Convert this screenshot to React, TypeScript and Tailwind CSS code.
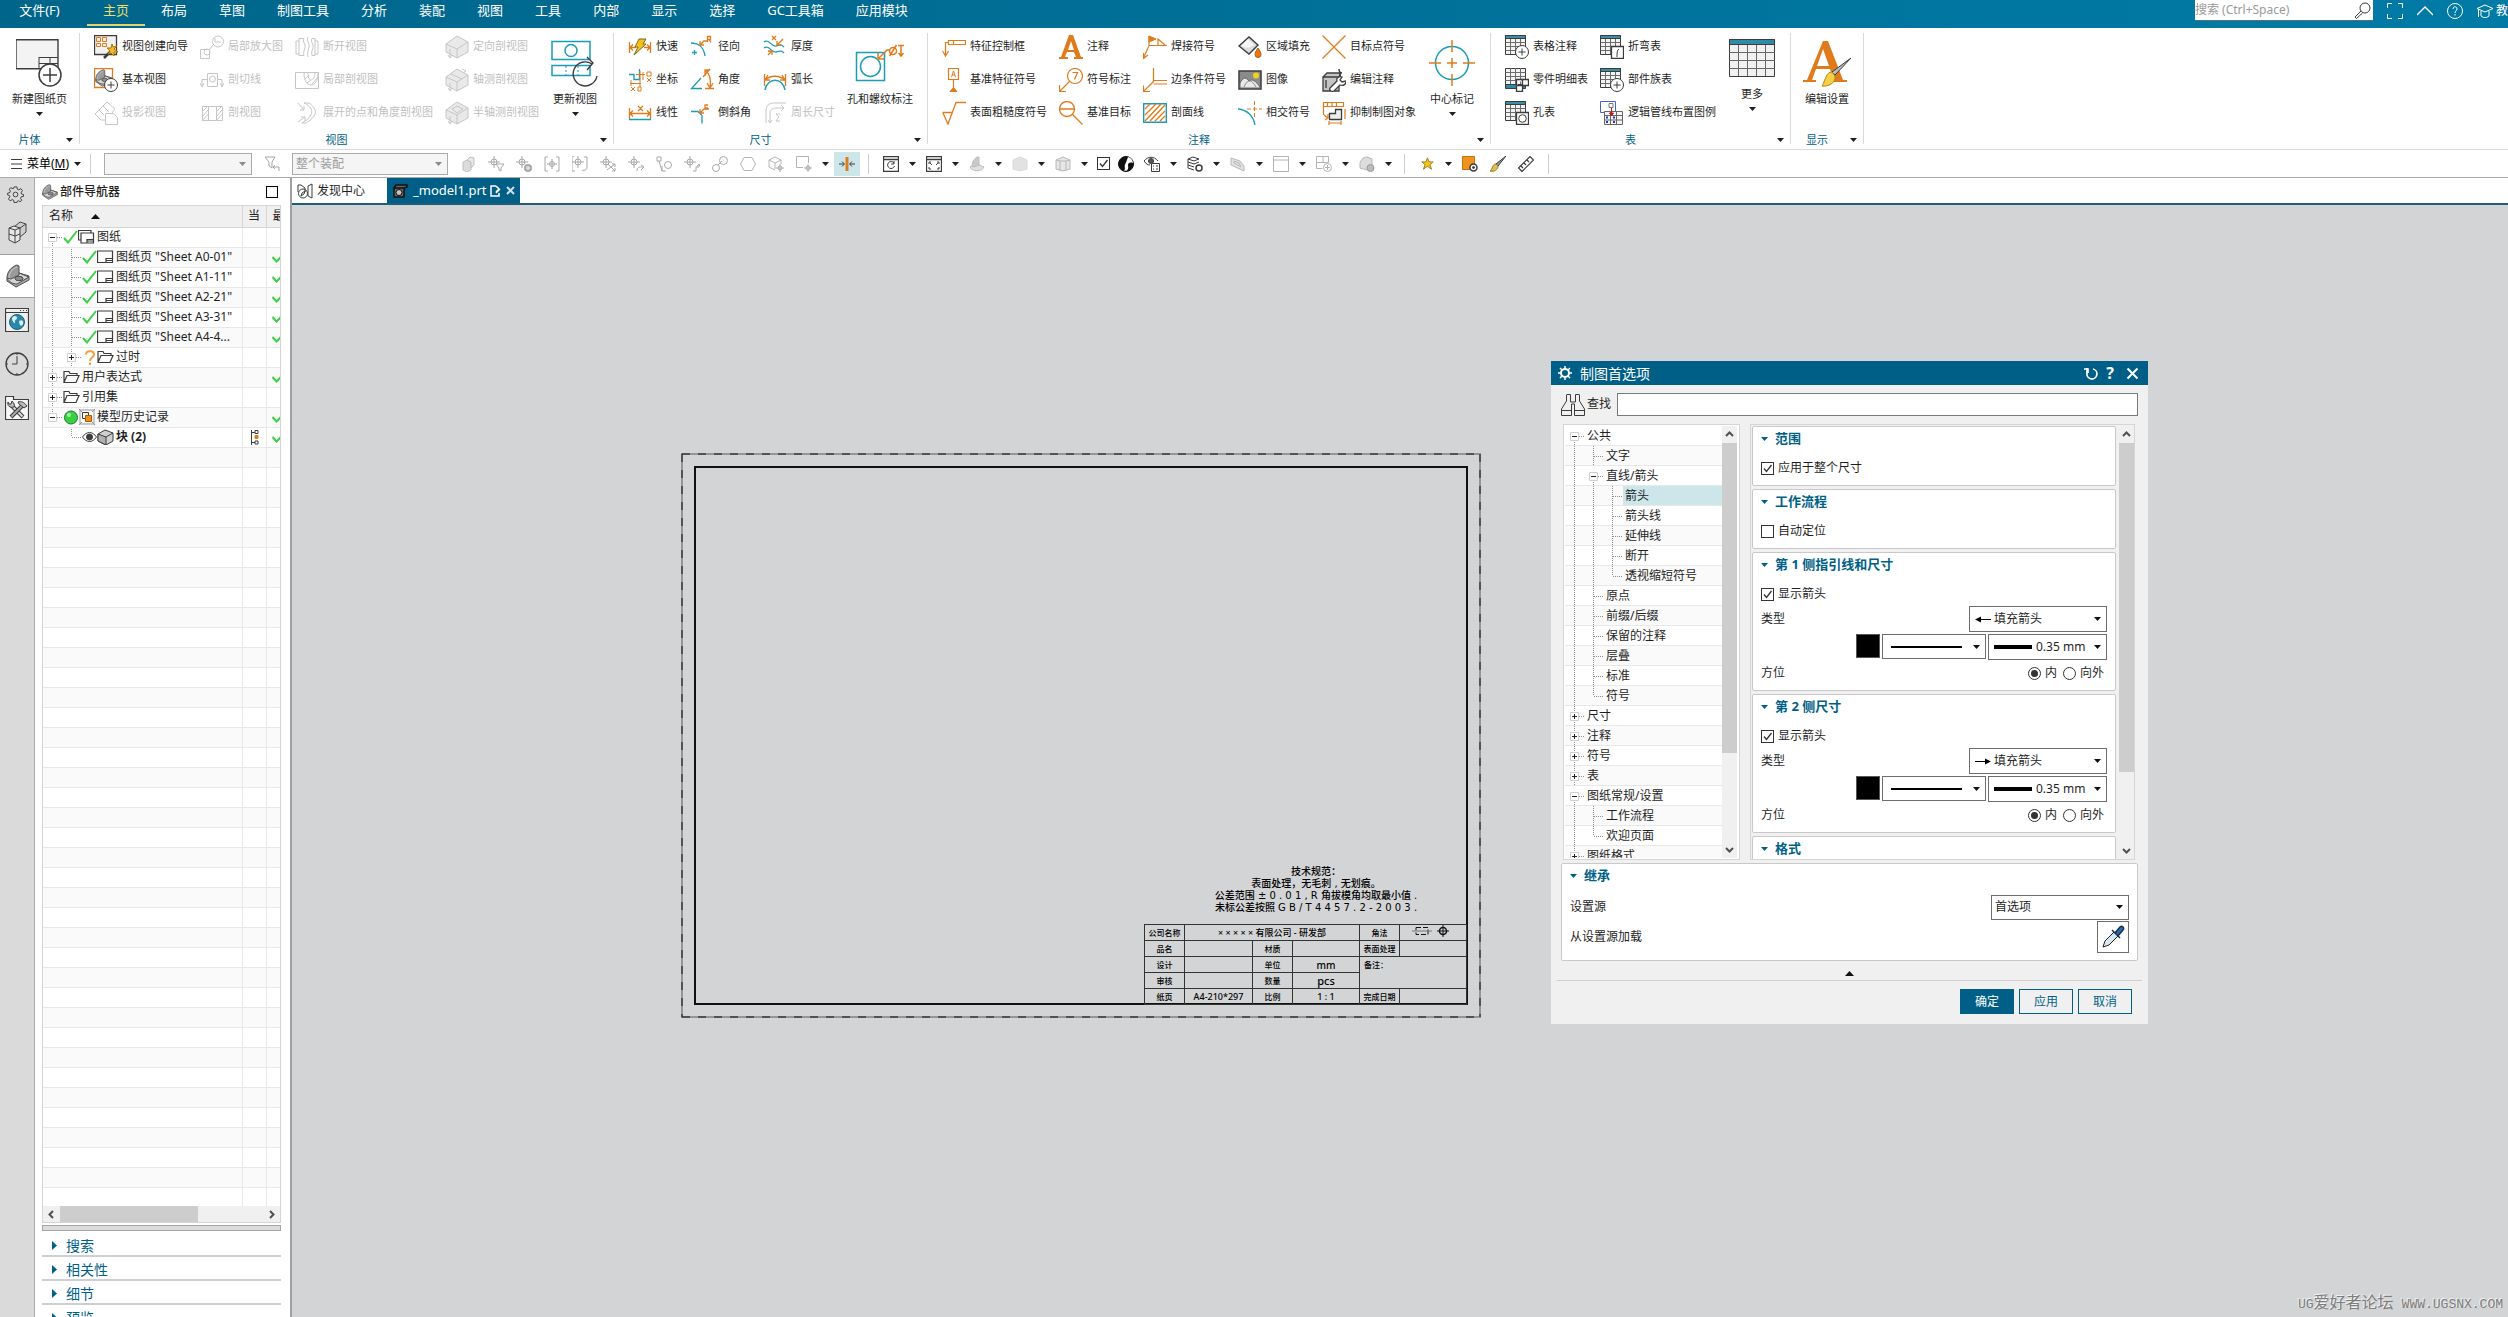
import type { ReactNode } from "react";

const O = "#e07b1c";
const T = "#1b9bb8";
const K = "#3c3c3c";
const D = "#c6c6c6";

type IconProps = { children: ReactNode; w?: number; h?: number; box?: string };

function Icon({ children, w = 24, h = 24, box }: IconProps) {
  return (
    <svg
      width={w}
      height={h}
      viewBox={box ?? `0 0 ${w} ${h}`}
      fill="none"
      stroke={K}
      strokeWidth="1"
      className="shrink-0"
      aria-hidden="true"
    >
      {children}
    </svg>
  );
}

function Caret({ color = "#1f1f1f" }: { color?: string }) {
  return (
    <svg width="7" height="4" viewBox="0 0 7 4" className="shrink-0" aria-hidden="true">
      <path d="M0 0h7L3.5 4z" fill={color} />
    </svg>
  );
}

/* ---------- ribbon icons ---------- */

const cubeShape = (
  <>
    <path d="M1 9 12 1l11 6v10l-11 6-11-6z" fill="#e9e9e9" stroke={D} />
    <path d="M1 9l11 5 11-7M12 14v9" stroke={D} />
  </>
);

const gridTable = (
  <>
    <path d="M.5.5h20v19H.5z" fill="#f3f3f3" />
    <path d="M.5.5h20v3H.5z" fill="#3a8fa8" />
    <path d="M.5 7.5h20M.5 11.5h20M.5 15.5h20M5.5 4v15M10.5 4v15M15.5 4v15" stroke="#6b6b6b" />
  </>
);

const roundPlus = (
  <>
    <circle cx="17" cy="17" r="6.5" fill="#fff" />
    <path d="M17 13.5v7M13.5 17h7" />
  </>
);

const partShape = (
  <>
    <path d="M1 14v3l9 6 13-7v-4L13 9z" fill="#a9a9a9" stroke="#4d4d4d" />
    <path d="M1 14 13 9l10 4-12 7c-4 0-8-2-10-6z" fill="#d6d6d6" stroke="#4d4d4d" />
    <path d="M1 14C1 8 5 3 11 1l2 1v9L5 15z" fill="#9a9a9a" stroke="#4d4d4d" />
    <path d="M3 14c0-5 3-9 8-11" stroke="#c9c9c9" />
    <ellipse cx="13" cy="14.5" rx="4" ry="2.2" fill="#8b8b8b" stroke="#4d4d4d" />
  </>
);

const wizardIcon = (
  <Icon>
    <path d="M.5.5h22v19H.5z" fill="#f1f1f1" strokeWidth="1.300" />
    <path d="M2.5 2.5h4v4h-4zM8.5 2.5h4v4h-4zM2.5 8.5h4v3h-4zM8.5 8.5h4v3h-4z" stroke={O} />
    <path d="m10 23 8-8" strokeWidth="2.5" />
    <path d="m18 9 1 3 4-1-3 3 4 3h-4v4l-3-3-3 1 2-3-3-3h4z" fill="#f0b92b" stroke="#a87800" />
  </Icon>
);

const baseViewIcon = (
  <Icon>
    <path d="M.5.5h18v19H.5z" stroke={O} strokeWidth="1.300" />
    <g transform="translate(1 1) scale(.75)">{partShape}</g>
    {roundPlus}
  </Icon>
);

const projectedIcon = (
  <Icon>
    <path d="M1 13 13 1l8 7-3 4M1 13l6 6h4M5 9l5 5M9 5l6 6" stroke={D} />
    <path d="M11.5 12.5h8l4 4v7h-12z" stroke={D} fill="#fff" />
  </Icon>
);

const detailIcon = (
  <Icon>
    <circle cx="18" cy="6.5" r="5.5" stroke={D} />
    <path d="M.5 14.5h9v9h-9zM13 10l-4 5M15 3v4h6" stroke={D} />
    <circle cx="7" cy="17" r="3" stroke={D} />
  </Icon>
);

const sectionLineIcon = (
  <Icon>
    <path d="M7.5 5.5h10v13h-10zM7 11.5H2v7M0 15l2 4 2-4M18 11.5h4v7M20 15l2 4 2-4" stroke={D} />
    <circle cx="12.5" cy="11" r="3" stroke={D} />
  </Icon>
);

const sectionViewIcon = (
  <Icon>
    <path d="M2.5 5.5h20v14h-20zM8.500 5v14M16.5 5v14M3 10l5-5M3 15l5-6M3 19l5-6M17 10l5-5M17 15l5-6M17 19l5-6" stroke={D} />
  </Icon>
);

const brokenIcon = (
  <Icon>
    <path d="M4 3.5h5c-2 4 2 5 1 9s-2 5-1 8H4zM4 6H1v13h3M20 3.5h-3c-2 4 2 5 1 9s-2 5-1 8h3zM20 6h3v13h-3M13 2c-2 4 2 6 1 10s-2 6-1 10" stroke={D} />
  </Icon>
);

const localSectionIcon = (
  <Icon>
    <path d="M.5 4.5h23v16H.5z" stroke={D} />
    <path d="M9 5c0 8 3 12 7 12s7-4 7-12M13 5c0 4 1 7 3 7s4-3 4-7M10 11l4-4M12 15l4-3M17 16l5-6" stroke={D} />
  </Icon>
);

const unfoldIcon = (
  <Icon>
    <path d="M9 2c7 3 9 8 7 12s-6 6-9 8M14 2c6 4 8 9 5 13s-5 5-8 7M3 2l6 7M9 5v4H5M3 21l7-5M6 16h4v4M9 2h5M7 22h4" stroke={D} />
  </Icon>
);

const orientCubeIcon = (
  <Icon>
    {cubeShape}
    <path d="M5 14v8M3 20l2 3 2-3" stroke={D} />
  </Icon>
);

const axoCubeIcon = (
  <Icon>
    {cubeShape}
    <path d="M6 6l11 5M5 15v7M3 20l2 3 2-3M17 1l4 2-3 2" stroke={D} />
  </Icon>
);

const halfAxoIcon = (
  <Icon>
    {cubeShape}
    <path d="M7 8l5-3 6 3-6 4zM5 15v7M3 20l2 3 2-3" stroke={D} />
  </Icon>
);

const rapidIcon = (
  <Icon>
    <path d="M1.5 7v11M22.5 7v11M2 12.5h6M16 12.5h6M5 9.5l-3 3 3 3M19 9.5l3 3-3 3" stroke={O} strokeWidth="1.300" />
    <path d="M11 4h7l-3 5h3L6 20l4-8H7z" fill="#f3c01c" stroke="#7d6a20" />
  </Icon>
);

const radialIcon = (
  <Icon>
    <path d="M1 8c8 0 13 5 14 13M2 17.5h5M4.5 15v5" stroke={T} strokeWidth="1.300" />
    <path d="M10 10l4-4h3M10 6v4h4M17.5 7V1.500h3v3h-3M19 4.500l2 3" stroke={O} strokeWidth="1.300" />
  </Icon>
);

const ordinateIcon = (
  <Icon>
    <path d="M1 6.5h5v5h5.5V1" stroke={T} strokeWidth="1.300" />
    <path d="M8 6.5h9M12 3v16M15 4v8M2 15.5h11M3 12v6M19 4h4v4h-4zM19 10l4 4M23 10l-4 4M3 19l4 4M7 19l-4 4M10 19h3v4h-3z" stroke={O} />
  </Icon>
);

const angularIcon = (
  <Icon>
    <path d="M11 10 1.5 20.500H12" stroke={T} strokeWidth="1.300" />
    <path d="m13 9 7-8M15 2c5 4 6 11 5 17M15 8V2h5M17 15l3 5 3-5M15 20.500h9" stroke={O} strokeWidth="1.300" />
  </Icon>
);

const linearIcon = (
  <Icon>
    <path d="M1.5 7v11M22.5 7v11M2 12.5h20M5 9.5l-3 3 3 3M19 9.5l3 3-3 3M10 5l5 5M15 5l-5 5" stroke={O} strokeWidth="1.300" />
    <path d="M1 18.5h22" stroke={T} strokeWidth="1.500" />
  </Icon>
);

const chamferIcon = (
  <Icon>
    <path d="M1 10.5h7l4 4v8" stroke={T} strokeWidth="1.300" />
    <path d="M10 12l4-4h5M10 8v4h4M18 4h-3v3h3" stroke={O} strokeWidth="1.300" />
  </Icon>
);

const thicknessIcon = (
  <Icon>
    <path d="M1 7c5-4 7 5 12 4s5-2 8 1M1 13c5-4 7 5 12 4s5-2 8 1" stroke={T} strokeWidth="1.300" />
    <path d="M9 1l4 4M13 1 9 5M20 4l-6 6M14 6v4h4M5 20l4-4M5 16h4v4" stroke={O} strokeWidth="1.300" />
  </Icon>
);

const arcLengthIcon = (
  <Icon>
    <path d="M2 22c2-13 18-13 20 0" stroke={T} strokeWidth="1.500" />
    <path d="M1.5 6v12M22.5 6v12M2 12C7 7 17 7 22 12M5 7l-3 5h5M19 7l3 5h-5" stroke={O} strokeWidth="1.300" />
  </Icon>
);

const perimeterIcon = (
  <Icon>
    <path d="M3 22V10c0-5 3-8 8-8h12M7 21V12c0-3 2-5 6-5h8M18 4l3 3-3 3M5 19l2 3 2-3M17 13h-4l3 3-3 4h4" stroke={D} />
  </Icon>
);

const holeIcon = (
  <Icon w={50} h={48}>
    <path d="M1.5 13.500h28v28h-28z" stroke={T} strokeWidth="1.500" />
    <circle cx="15.5" cy="27.5" r="10" stroke={T} strokeWidth="1.500" />
    <path d="m23 20 9-9h3M23 14v6h6M46 6v11M43 6.500h6M43.500 14l2.500 3 2.500-3" stroke={O} strokeWidth="1.500" />
    <circle cx="38" cy="12" r="3.500" stroke={O} strokeWidth="1.500" />
    <path d="m34.500 17 7-11" stroke={O} strokeWidth="1.500" />
  </Icon>
);

const featureFrameIcon = (
  <Icon>
    <path d="M6.5 5.5h17v4h-17zM11.5 5.500v4M6 7.500H3.500V20M.5 16l3 5 3-5" stroke={O} strokeWidth="1.200" />
  </Icon>
);

const datumFeatureIcon = (
  <Icon>
    <path d="M6.5.5h10v11h-10zM11.5 12v8" stroke={O} strokeWidth="1.200" />
    <path d="M8 23.5h7l-3.5-4z" fill={O} stroke={O} />
    <path d="m9.500 9 2-6 2 6M10 7h3" stroke={O} />
  </Icon>
);

const surfaceIcon = (
  <Icon>
    <path d="M.5 11.500h9M1 12l5 11L14 1.500h10" stroke={O} strokeWidth="1.300" />
  </Icon>
);

const noteIcon = (
  <Icon>
    <path d="M0 24v-2h2L10 0h4l8 22h2v2h-9v-2h2l-2-5H8l-2 5h3v2zM9 15h6L12 6z" fill={O} stroke="none" />
  </Icon>
);

const balloonIcon = (
  <Icon>
    <circle cx="16" cy="8" r="7.500" stroke={O} strokeWidth="1.200" />
    <path d="M11 13 1 23M.5 17v6.500H7M13.500 4.500h5l-3 7" stroke={O} strokeWidth="1.200" />
  </Icon>
);

const datumTargetIcon = (
  <Icon>
    <circle cx="8" cy="8" r="7.500" stroke={O} strokeWidth="1.300" />
    <path d="M.5 8h15M13 13l10.500 10.500" stroke={O} strokeWidth="1.300" />
  </Icon>
);

const weldIcon = (
  <Icon>
    <path d="M.5 23 6 10.500h18M6 10V1M.5 18v5.500L5 20M15 10V4l7 6" stroke={O} strokeWidth="1.200" />
    <path d="M6 1l7 3-7 3z" fill={O} stroke={O} />
  </Icon>
);

const edgeIcon = (
  <Icon>
    <path d="M10.500 0v12.500H24M10.500 16H24M11 13 1 23M.5 17.500v6H7" stroke={O} strokeWidth="1.200" />
  </Icon>
);

const hatchIcon = (
  <Icon>
    <path d="M.7 2.700h22.600v18.600H.7z" stroke={T} strokeWidth="1.400" />
    <path d="M2 8l5-5M2 14 13 3M2 20 18 3M7 20 22 4M12 20 22 10M17 20l5-5" stroke={O} strokeWidth="1.400" />
  </Icon>
);

const fillIcon = (
  <Icon>
    <path d="M1 11 11 2l9 8-9 9z" fill="#dcdcdc" strokeWidth="1.400" />
    <path d="M3 11 10 4l6 6-6 3z" fill="#f7f7f7" stroke="none" />
    <path d="M20 13c2 3 3 5 3 6.500a3 3 0 0 1-6 0c0-1.500 1-3.500 3-6.500z" fill="#e67817" stroke="#b85c0b" />
  </Icon>
);

const imageIcon = (
  <Icon>
    <path d="M1 3h22v18H1z" fill="#8b8b8b" strokeWidth="1.500" />
    <circle cx="18" cy="7.500" r="3" fill="#f3d21c" stroke="none" />
    <path d="M2 15c3-6 6-6 9-2 3-2 6-1 11 6v1H2z" fill="#e9e9e9" stroke="#666" />
    <path d="M6 19c2-5 4-6 6-6s4 3 6 6" stroke="#888" />
  </Icon>
);

const intersectIcon = (
  <Icon>
    <path d="M0 8c9 1 15 6 17 16" stroke={T} strokeWidth="1.300" />
    <path d="M16.500 0v4M16.500 6v4M16.500 12v4M9 8h4M15 8h4M21 8h3" stroke={O} />
  </Icon>
);

const targetPointIcon = (
  <Icon>
    <path d="m.5.5 23 23M23.500.5l-23 23" stroke={O} strokeWidth="1.200" />
  </Icon>
);

const editNoteIcon = (
  <Icon>
    <path d="M1 9h16v14H1zM1 9l4-4h13v4M4 12v8" fill="#c4c4c4" strokeWidth="1.300" />
    <path d="M17 1c0 3 1 4 3 4M18 5v3" strokeWidth="1.500" />
    <path d="m8 20 7-7c-1-3 2-5 5-4l-2 3 2 2 4-1c0 4-3 5-6 4l-6 6c-3 1-5-1-4-3z" fill="#fff" strokeWidth="1.300" />
  </Icon>
);

const suppressIcon = (
  <Icon>
    <path d="M1.500 1.500h20v4h-20zM5.500 2v3M10 2v3M14.500 2v3M1.500 6v8M2 14l4 3M3 19l3-2v-4M23 8v10M7 22h12M7 20v4M19 20v4" stroke={O} strokeWidth="1.200" />
    <path d="M7.500 18.500v-6h6v-4h6v10z" fill="#eee" strokeWidth="1.300" />
  </Icon>
);

const centerMarkIcon = (
  <Icon w={46} h={48}>
    <circle cx="23" cy="24" r="16.500" stroke={T} strokeWidth="1.500" />
    <path d="M23 1v12M23 35v12M0 24h12M34 24h12M18 24h10M23 19v10" stroke={O} strokeWidth="1.500" />
  </Icon>
);

const tableNoteIcon = <Icon>{gridTable}{roundPlus}</Icon>;

const partsListIcon = (
  <Icon>
    <path d="M.5.5h20v19H.5z" fill="#f3f3f3" />
    <path d="M.5 16.500h20v4H.5z" fill="#2d89a5" />
    <path d="M.5 4.500h20M.5 8.500h20M.5 12.500h20M5.500 0v16M10.500 0v16M15.500 0v16" stroke="#6b6b6b" />
    <path d="M17.500 11.500h6v6h-6zM11.500 17.500h6v6h-6z" fill="#fff" strokeWidth="1.300" />
    <path d="M17.500 11.500h-6v6" fill="#fff" strokeWidth="1.300" />
  </Icon>
);

const holeTableIcon = (
  <Icon>
    {gridTable}
    <path d="M11.500 11.500h12v12h-12z" fill="#fff" strokeWidth="1.300" />
    <circle cx="17.500" cy="17.500" r="3.800" />
  </Icon>
);

const bendTableIcon = (
  <Icon>
    {gridTable}
    <path d="M11.500 11.500h12v12h-12z" fill="#fff" strokeWidth="1.300" />
    <path d="M19 14c-2 1-2 4-2 8" />
  </Icon>
);

const routingIcon = (
  <Icon>
    <path d="M.5.5h15v11H.5z" stroke="#4a63c4" />
    <path d="M9 2.500h4v4H9z" stroke="#777" />
    <path d="M4.500 10.500h18v13h-18zM4.500 14.500h18M4.500 19h18M10.500 11v12M16.500 11v12" fill="#f4f4f4" stroke="#666" />
    <path d="M11.500 7v7M9.500 12l2 3 2-3z" stroke="#c31818" fill="#c31818" />
    <path d="M6 16.500h2M6 21h2M13 16.500h2M13 21h2" stroke="#2337b8" strokeWidth="2" />
  </Icon>
);

const newSheetIcon = (
  <Icon w={48} h={48}>
    <path d="M0 .7h42v29H0z" fill="#f3f3f3" strokeWidth="1.400" />
    <path d="M23 18.500h19M23 24.500h19M23 18v12M32 24v6M34 18v6" />
    <circle cx="34" cy="36" r="11" fill="#fff" strokeWidth="1.500" />
    <path d="M34 29v14M27 36h14" strokeWidth="1.500" />
  </Icon>
);

const updateViewIcon = (
  <Icon w={48} h={48}>
    <path d="M1 2.500h38v18H1zM1 26.500h38v10H1z" stroke={T} strokeWidth="1.500" />
    <circle cx="20" cy="11.500" r="6" stroke={T} strokeWidth="1.500" />
    <path d="M15 27v10M27 27v10" stroke={T} strokeDasharray="2 2" />
    <path d="M46 37a12 12 0 1 1-5-12M36 18l6 6-6 7" strokeWidth="1.400" />
  </Icon>
);

const moreTableIcon = (
  <Icon w={48} h={43}>
    <path d="M1.500.5h45v37h-45z" fill="#f1f1f1" />
    <path d="M1.500.5h45v5h-45z" fill="#2f8ca8" />
    <path d="M1 13.500h46M1 21.500h46M1 29.500h46M10.500 6v31M19.500 6v31M28.500 6v31M37.500 6v31" stroke="#666" />
  </Icon>
);

const editSettingsIcon = (
  <Icon w={48} h={48}>
    <path d="M0 43v-2h4L20 2h5l15 39h4v2H26v-2h5l-4-11H13L9 41h4v2zM14 27h12L20 10z" fill={O} stroke="none" />
    <path d="M48 19 32 36l-3-3z" fill="#bbb" />
    <path d="M29 33c-6 0-6 7-10 14 6 1 14-3 13-10z" fill="#f5cf45" stroke="#a98a1c" />
  </Icon>
);

/* ---------- ribbon ---------- */

type Cmd = { label: string; icon: ReactNode; off?: boolean };

type Group = {
  name: string;
  cmds: Cmd[];
  big: { label: string; icon: ReactNode; menu?: boolean };
};

const MENUS = ["主页", "布局", "草图", "制图工具", "分析", "装配", "视图", "工具", "内部", "显示", "选择", "GC工具箱", "应用模块"];

const GROUPS: Group[] = [
  { name: "片体", cmds: [], big: { label: "新建图纸页", icon: newSheetIcon, menu: true } },
  {
    name: "视图",
    cmds: [
      { label: "视图创建向导", icon: wizardIcon },
      { label: "基本视图", icon: baseViewIcon },
      { label: "投影视图", icon: projectedIcon, off: true },
      { label: "局部放大图", icon: detailIcon, off: true },
      { label: "剖切线", icon: sectionLineIcon, off: true },
      { label: "剖视图", icon: sectionViewIcon, off: true },
      { label: "断开视图", icon: brokenIcon, off: true },
      { label: "局部剖视图", icon: localSectionIcon, off: true },
      { label: "展开的点和角度剖视图", icon: unfoldIcon, off: true },
      { label: "定向剖视图", icon: orientCubeIcon, off: true },
      { label: "轴测剖视图", icon: axoCubeIcon, off: true },
      { label: "半轴测剖视图", icon: halfAxoIcon, off: true },
    ],
    big: { label: "更新视图", icon: updateViewIcon, menu: true },
  },
  {
    name: "尺寸",
    cmds: [
      { label: "快速", icon: rapidIcon },
      { label: "坐标", icon: ordinateIcon },
      { label: "线性", icon: linearIcon },
      { label: "径向", icon: radialIcon },
      { label: "角度", icon: angularIcon },
      { label: "倒斜角", icon: chamferIcon },
      { label: "厚度", icon: thicknessIcon },
      { label: "弧长", icon: arcLengthIcon },
      { label: "周长尺寸", icon: perimeterIcon, off: true },
    ],
    big: { label: "孔和螺纹标注", icon: holeIcon },
  },
  {
    name: "注释",
    cmds: [
      { label: "特征控制框", icon: featureFrameIcon },
      { label: "基准特征符号", icon: datumFeatureIcon },
      { label: "表面粗糙度符号", icon: surfaceIcon },
      { label: "注释", icon: noteIcon },
      { label: "符号标注", icon: balloonIcon },
      { label: "基准目标", icon: datumTargetIcon },
      { label: "焊接符号", icon: weldIcon },
      { label: "边条件符号", icon: edgeIcon },
      { label: "剖面线", icon: hatchIcon },
      { label: "区域填充", icon: fillIcon },
      { label: "图像", icon: imageIcon },
      { label: "相交符号", icon: intersectIcon },
      { label: "目标点符号", icon: targetPointIcon },
      { label: "编辑注释", icon: editNoteIcon },
      { label: "抑制制图对象", icon: suppressIcon },
    ],
    big: { label: "中心标记", icon: centerMarkIcon, menu: true },
  },
  {
    name: "表",
    cmds: [
      { label: "表格注释", icon: tableNoteIcon },
      { label: "零件明细表", icon: partsListIcon },
      { label: "孔表", icon: holeTableIcon },
      { label: "折弯表", icon: bendTableIcon },
      { label: "部件族表", icon: tableNoteIcon },
      { label: "逻辑管线布置图例", icon: routingIcon },
    ],
    big: { label: "更多", icon: moreTableIcon, menu: true },
  },
  { name: "显示", cmds: [], big: { label: "编辑设置", icon: editSettingsIcon } },
];

function RibbonGroup({ group }: { group: Group }) {
  return (
    <>
      <section className="flex flex-col pt-[2px]" aria-label={group.name}>
        <div className={`flex h-[101px] gap-3 ${group.cmds.length > 0 ? "px-3.5" : "px-3"}`}>
          {group.cmds.length > 0 && (
            <div className="grid grid-flow-col grid-rows-[33px_33px_33px] gap-x-3">
              {group.cmds.map((c) => (
                <button
                  key={c.label}
                  disabled={c.off}
                  className="flex items-center gap-1 text-[11px] whitespace-nowrap text-[#1f1f1f] disabled:text-[#c0c0c0]"
                >
                  {c.icon}
                  {c.label}
                </button>
              ))}
            </div>
          )}
          <button className="flex min-w-12 flex-col items-center pt-[9px] text-[11px] whitespace-nowrap text-[#1f1f1f]">
            {group.big.icon}
            <span className="mt-[3px] leading-[18px]">{group.big.label}</span>
            {group.big.menu && (
              <span className="mt-1">
                <Caret />
              </span>
            )}
          </button>
        </div>
        <div className="flex h-[18px] items-center text-[11px] text-[#005f87]">
          <span className="flex-1 text-center">{group.name}</span>
          <button className="flex w-5 justify-center" aria-label={`${group.name}选项`}>
            <Caret />
          </button>
        </div>
      </section>
      <div className="my-[5px] w-px bg-[#d9d9d9]" />
    </>
  );
}

function MenuBar() {
  return (
    <header className="flex h-7 shrink-0 items-stretch bg-gradient-to-r from-[#00658a] to-[#007ba6] text-[13px] text-white">
      <button className="w-[87px] pr-2 pb-[6px]">文件(F)</button>
      {MENUS.map((m, i) => (
        <button
          key={m}
          className={
            i === 0
              ? "mb-[2px] border-b-2 border-[#e8d36b] px-4 pb-[2px] text-[#f0dc6e]"
              : "mb-[2px] border-b-2 border-transparent px-4 pb-[2px]"
          }
        >
          {m}
        </button>
      ))}
      <div className="ml-auto flex h-[21px] items-center">
        <div className="flex h-[21px] w-[178px] items-center border-b border-[#54707c] bg-white pr-[2px]">
          <input
            aria-label="搜索"
            placeholder="搜索 (Ctrl+Space)"
            className="min-w-0 flex-1 text-[12px] text-black outline-none placeholder:text-[#9a9a9a]"
          />
          <Icon w={17} h={17}>
            <circle cx="11" cy="6" r="5" />
            <path d="m7 9-6 6 1.500 1.500 6-5.500" />
          </Icon>
        </div>
        <div className="flex items-center gap-[14px] pl-[14px] text-[12px]">
          <Icon w={16} h={16}>
            <path d="M.5 5V.5H5M11 .5h4.500V5M15.500 11v4.500H11M5 15.500H.5V11" stroke="#fff" />
          </Icon>
          <Icon w={16} h={16}>
            <path d="m0 12 8-8 8 8" stroke="#fff" strokeWidth="1.300" />
          </Icon>
          <Icon w={16} h={16}>
            <circle cx="8" cy="8" r="7.500" stroke="#fff" />
            <path d="M6 6c0-3 4-3 4 0 0 2-2 1.500-2 4M8 11v1.500" stroke="#fff" />
          </Icon>
          <span className="flex shrink-0 items-center gap-[3px]">
            <Icon w={16} h={16}>
              <path d="M0 5.500 8 2l8 3.500L8 9zM4 8v5c2 2 6 2 8 0V8M1.500 6v8" stroke="#fff" />
            </Icon>
            教
          </span>
        </div>
      </div>
    </header>
  );
}

/* ---------- selection / view toolbar ---------- */

const snap = (extra: ReactNode) => (
  <Icon w={16} h={16}>
    <g stroke="#a8a8a8">
      <circle cx="6" cy="6" r="3" />
      <path d="M6 0v12M0 6h12" />
      {extra}
    </g>
  </Icon>
);

const FILTER_ICONS: ReactNode[] = [
  <Icon w={16} h={16} key="part">
    <path d="m3 6 4-2 4 2v8l-4 2-4-2z" fill="#dcdcdc" stroke="#c0c0c0" />
    <path d="m7 4 3-3 4 1v7l-3 3V6z" fill="#e8e8e8" stroke="#c0c0c0" />
  </Icon>,
  snap(<path d="M8 8h8l-3 4v3l-2-1v-2z" fill="#fff" />),
  snap(<circle cx="12" cy="12" r="3" fill="#ddd" strokeWidth="2" />),
  <Icon w={16} h={16} key="box">
    <path d="M4 1H1v14h3M12 1h3v14h-3M8 3v10M3 8h10" stroke="#a8a8a8" />
    <circle cx="8" cy="8" r="2.500" stroke="#a8a8a8" />
  </Icon>,
  snap(<path d="M3 0H0v15h3M12 1h3v10M10 14c3 1 5 0 5-3" />),
  snap(<path d="m7 14 8-6M15 15 8 8M12 15h3v-3M12 8h3v3" />),
  snap(<path d="M9 15c0-4 2-4 6-4M13 9l3 2-3 3" />),
  <Icon w={16} h={16} key="chain">
    <path d="M1 1h4v4H1zM3 5l3 10M6 10v5h4" stroke="#a8a8a8" />
    <circle cx="12" cy="9" r="3.500" stroke="#a8a8a8" />
  </Icon>,
  snap(<path d="M9 15h3v-4h3V8M13 10l2-2 1 2" />),
  <Icon w={16} h={16} key="link">
    <circle cx="11.500" cy="4.500" r="4" stroke="#a8a8a8" />
    <circle cx="4" cy="12" r="3.500" stroke="#a8a8a8" />
    <path d="m6 9 4-4" stroke="#a8a8a8" />
  </Icon>,
  <Icon w={16} h={16} key="hex">
    <path d="M4 1.500h8L15.500 8 12 14.500H4L.5 8z" stroke="#b4b4b4" />
  </Icon>,
  <Icon w={16} h={16} key="cube">
    <path d="m1 4 6-3 6 3v4M1 4v7l6 3M1 4l6 3 6-3M7 7v6M12 8v8M8 12h8" stroke="#b4b4b4" />
    <circle cx="12" cy="12" r="2" stroke="#a8a8a8" />
  </Icon>,
  <Icon w={16} h={16} key="area">
    <path d="M7 11.500H.5V.5h12V7M12 8v8M8 12h8" stroke="#b4b4b4" />
    <circle cx="12" cy="12" r="2" stroke="#a8a8a8" />
  </Icon>,
];

const VIEW_ICONS: ReactNode[] = [
  <Icon w={16} h={16} key="refresh">
    <path d="M.5.5h15v15H.5zM.5 3.500h15" strokeWidth="1.300" />
    <path d="M11 7a3.500 3.500 0 1 0 .5 3M11 5v3H8" />
  </Icon>,
  <Icon w={16} h={16} key="fit">
    <path d="M.5.5h15v15H.5zM.5 3.500h15" strokeWidth="1.300" />
    <path d="M3 8V6h2M11 6h2v2M13 11v2h-2M5 13H3v-2M4 7l2 2M12 7l-2 2" />
  </Icon>,
  <Icon w={16} h={16} key="part">
    <path d="M1 11 8 8l7 3c-2 5-12 5-14 0z" fill="#e0e0e0" stroke="#bdbdbd" />
    <path d="M3 10c0-4 2-7 5-9h2v8l-5 2z" fill="#c9c9c9" stroke="#bdbdbd" />
  </Icon>,
  <Icon w={16} h={16} key="solid">
    <path d="m1 4 7-3 7 3v9l-7 2-7-2z" fill="#e2e2e2" stroke="#dadada" />
  </Icon>,
  <Icon w={16} h={16} key="prism">
    <path d="m1 4 7-3 7 3v9l-7 2-7-2zM1 4l4 1v10M5 5h6v10M11 5l4-1" fill="#e6e6e6" stroke="#b8b8b8" />
  </Icon>,
];

const RENDER_ICONS: ReactNode[] = [
  <Icon w={16} h={16} key="eye">
    <path d="M0 5c4-5 10-5 14 0M0 5c2 3 4 4 6 4" />
    <circle cx="7" cy="5" r="2.500" fill="#555" />
    <path d="M7.500 7.500h8v8h-8zM9 10h1M9 13h1M12 10h2M12 13h2" fill="#fff" />
  </Icon>,
  <Icon w={16} h={16} key="layers">
    <path d="m1 3 5-2 6 2-5 2zM1 6l6 2 5-2M1 9l6 2M1 12l6 2M1 3v9" />
    <circle cx="12" cy="12" r="3" fill="#fff" strokeWidth="1.500" />
  </Icon>,
  <Icon w={16} h={16} key="cut">
    <path d="m1 2 9 3 4 5v5L1 9zM4 5l5 2 2 4-7-4z" fill="#e2e2e2" stroke="#b8b8b8" />
  </Icon>,
  <Icon w={16} h={16} key="window">
    <path d="M.5.5h15v15H.5zM.5 4h15" stroke="#b4b4b4" />
  </Icon>,
  <Icon w={16} h={16} key="layout">
    <path d="M.5.5h12v6M.5.5v12h6M7 .5v6M.5 6.500h12" stroke="#b4b4b4" />
    <circle cx="11.500" cy="11.500" r="4" stroke="#b4b4b4" />
    <path d="M11.500 9v5M9 11.500h5" stroke="#b4b4b4" />
  </Icon>,
  <Icon w={16} h={16} key="clip">
    <path d="M1 7c1-4 4-6 8-6l4 2v6l-5 5-7-2z" fill="#dcdcdc" stroke="#b8b8b8" />
    <circle cx="11.500" cy="12" r="3.500" fill="#bbb" stroke="#999" />
  </Icon>,
];

function ToolButton({ icon, menu }: { icon: ReactNode; menu?: boolean }) {
  return (
    <button className="flex h-6 items-center">
      <span className="flex w-7 justify-center">{icon}</span>
      {menu && (
        <span className="flex w-[15px] justify-center">
          <Caret />
        </span>
      )}
    </button>
  );
}

function Rule() {
  return <div className="mx-2 h-5 w-px bg-[#cfcfcf]" />;
}

function Toolbar() {
  return (
    <div className="flex h-[29px] shrink-0 items-center border-t border-b border-t-[#d9d9d9] border-b-[#a9a9a9] pl-[11px] text-[12px]">
      <button className="flex items-center gap-[5px]">
        <Icon w={11} h={12}>
          <path d="M0 1.500h11M0 6h11M0 10.500h11" />
        </Icon>
        <span>
          菜单(<u>M</u>)
        </span>
        <Caret />
      </button>
      <div className="ml-[9px] h-5 w-px bg-[#cfcfcf]" />
      <DropDown label="类型过滤器" options={[""]} className="ml-[13px] h-[22px] w-[148px]" disabled />
      <span className="flex w-10 justify-center">
        <Icon w={16} h={16}>
          <path d="M1 1h10L8 6v6l-3-2V6zM9 11h6v4M11 9l-2 2 2 2" stroke="#a5a5a5" />
        </Icon>
      </span>
      <DropDown label="选择范围" options={["整个装配"]} className="mr-[6px] h-[22px] w-[156px]" disabled />
      {FILTER_ICONS.map((icon, i) => (
        <ToolButton key={i} icon={icon} menu={i === FILTER_ICONS.length - 1} />
      ))}
      <button className="ml-px flex h-6 w-[26px] items-center justify-center bg-[#cde6ea]" aria-label="捕捉">
        <Icon w={16} h={16}>
          <path d="M8 1v14" stroke={O} strokeWidth="3" />
          <path d="M0 8h5M3 5.500 5.500 8 3 10.500M16 8h-5M13 5.500 10.500 8l2.500 2.500" />
        </Icon>
      </button>
      <Rule />
      {VIEW_ICONS.map((icon, i) => (
        <ToolButton key={i} icon={icon} menu />
      ))}
      <span className="flex w-[22px] justify-center">
        <Check label="剖切" />
      </span>
      <span className="flex w-6 justify-center">
        <Icon w={16} h={16}>
          <circle cx="8" cy="8" r="7.500" fill="#111" stroke="#111" />
          <path d="M10 1a7 7 0 0 1 5 6c-3-1-5 0-5 2s1 3-1 5.500c-2 .5-3 0-3 0 2-2 0-4 1-6s2-4 3-7.500z" fill="#fff" stroke="none" />
        </Icon>
      </span>
      {RENDER_ICONS.map((icon, i) => (
        <ToolButton key={i} icon={icon} menu />
      ))}
      <Rule />
      <ToolButton
        menu
        icon={
          <Icon w={13} h={13} box="0 0 16 16">
            <path d="m8 1 2 5h5l-4 3.500 2 5.500-5-3.500L3 15l2-5.500L1 6h5z" fill="#f5c518" stroke="#8a6d10" />
          </Icon>
        }
      />
      <ToolButton
        icon={
          <Icon w={16} h={16}>
            <path d="M.5.5h12v13H.5z" fill="#f0921f" stroke="#c96f0c" />
            <circle cx="11.500" cy="11.500" r="3.500" fill="#fff" strokeWidth="1.500" />
            <circle cx="11.500" cy="11.500" r="1" fill={K} />
          </Icon>
        }
      />
      <ToolButton
        icon={
          <Icon w={16} h={16}>
            <path d="M16 0 8 10 6 8z" fill="#999" />
            <path d="M6 8c-4 0-3 5-6 7 4 1 8-1 8-5z" fill="#e3bf55" stroke="#8f762c" />
          </Icon>
        }
      />
      <ToolButton
        icon={
          <Icon w={16} h={16}>
            <path d="M.5 12 12 .5l3.500 3.500L4 15.500zM3 10l2 2M6 7l2 2M9 4l2 2" strokeWidth="1.200" />
          </Icon>
        }
      />
      <Rule />
    </div>
  );
}

/* ---------- form controls ---------- */

type DropDownProps = {
  label: string;
  options: string[];
  className: string;
  disabled?: boolean;
  lead?: ReactNode;
  indent?: string;
};

function DropDown({ label, options, className, disabled, lead, indent = "pl-[3px]" }: DropDownProps) {
  return (
    <div className={`relative flex items-center border ${disabled ? "border-[#ababab] bg-[#f5f5f5]" : "border-[#6e6e6e] bg-white"} ${className}`}>
      {lead && <span className="pointer-events-none absolute left-[5px]">{lead}</span>}
      <select
        aria-label={label}
        disabled={disabled}
        className={`h-full w-full appearance-none bg-transparent text-[12px] text-[#1f1f1f] outline-none disabled:text-[#9c9c9c] ${indent}`}
      >
        {options.map((o) => (
          <option key={o}>{o}</option>
        ))}
      </select>
      <span className="pointer-events-none absolute right-[5px] flex">
        <Caret color={disabled ? "#8a8a8a" : "#111"} />
      </span>
    </div>
  );
}

function Check({ label, text, off }: { label?: string; text?: string; off?: boolean }) {
  return (
    <label className="flex items-center gap-1">
      <span className="relative flex">
        <input
          type="checkbox"
          aria-label={label}
          defaultChecked={!off}
          className="peer size-[13px] appearance-none border border-[#333] bg-white"
        />
        <svg viewBox="0 0 13 13" className="pointer-events-none absolute inset-0 hidden size-[13px] peer-checked:block">
          <path d="m3 6.500 2.500 3L10.500 3" fill="none" stroke="#333" strokeWidth="1.300" />
        </svg>
      </span>
      {text}
    </label>
  );
}

function Radio({ name, text, on }: { name: string; text: string; on?: boolean }) {
  return (
    <label className="flex items-center gap-1">
      <span className="relative flex">
        <input
          type="radio"
          name={name}
          defaultChecked={on}
          className="peer size-[13px] appearance-none rounded-full border border-[#333] bg-white"
        />
        <span className="pointer-events-none absolute inset-[3px] hidden rounded-full bg-[#333] peer-checked:block" />
      </span>
      {text}
    </label>
  );
}

function Chevron({ d }: { d: string }) {
  return (
    <svg width="9" height="9" viewBox="0 0 9 9" aria-hidden="true">
      <path d={d} fill="none" stroke="#505050" strokeWidth="2" />
    </svg>
  );
}

function ScrollBar({ thumb }: { thumb: string }) {
  return (
    <div className="flex w-[15px] shrink-0 flex-col items-center bg-[#f0f0f0]">
      <button className="flex h-[17px] items-center" aria-label="向上滚动">
        <Chevron d="m1 6 3.500-3.500L8 6" />
      </button>
      <div className={`w-full bg-[#cdcdcd] ${thumb}`} />
      <button className="mt-auto flex h-[17px] items-center" aria-label="向下滚动">
        <Chevron d="m1 3 3.500 3.500L8 3" />
      </button>
    </div>
  );
}

/* ---------- trees ---------- */

// "|" passes through, "+" and "-" are expanders ("L" closes its level), "t" a branch, "l" the last branch
function Guides({ spec }: { spec: string }) {
  return (
    <span className="mr-px flex shrink-0">
      {spec.split("").map((s, i) => (
        <svg key={i} width="19" height="20" viewBox="0 0 19 20" fill="none" aria-hidden="true">
          {s === "|" || s === "t" || s === "+" ? <path d="M9.500 0v20" stroke="#8f8f8f" strokeDasharray="1 1" /> : null}
          {s === "l" || s === "L" ? <path d="M9.500 0v10" stroke="#8f8f8f" strokeDasharray="1 1" /> : null}
          {s !== "|" && s !== " " && <path d="M10 10.500h9" stroke="#8f8f8f" strokeDasharray="1 1" />}
          {s === "-" && <path d="M9.500 10v10" stroke="#8f8f8f" strokeDasharray="1 1" />}
          {(s === "+" || s === "-" || s === "L") && (
            <>
              <path d="M5.500 6.500h8v8h-8z" fill="#fff" stroke="#cfcfcf" />
              <path d={s === "+" ? "M7 10.500h5M9.500 8v5" : "M7 10.500h5"} stroke="#222" />
            </>
          )}
        </svg>
      ))}
    </span>
  );
}

const tick = (
  <Icon w={15} h={14}>
    <path d="m1 8 4 4.500L14 1" stroke="#3bcf45" strokeWidth="2" />
  </Icon>
);
const sheet = (
  <Icon w={17} h={14}>
    <path d="M.5 1h15v11.500H.5zM9 12V8.500h6M9 10.500h6" strokeWidth="1.200" />
  </Icon>
);
const sheets = (
  <Icon w={17} h={14}>
    <path d="M3 10H.5V.5H13V3M3 3h12.500v10H3zM9 13V9.500h6M9 11h6" strokeWidth="1.200" />
  </Icon>
);
const folder = (
  <Icon w={17} h={14}>
    <path d="M1 12.500v-11h5l1 2h7v2M1 12.500l3-7h12l-3 7z" strokeWidth="1.200" />
  </Icon>
);
const question = (
  <Icon w={15} h={15}>
    <path d="M4 4.500C4 0 12 0 12 4.500c0 3-4 3-4 6.500M8 12.500V15" stroke="#f0a040" strokeWidth="2" />
  </Icon>
);
const greenBall = (
  <Icon w={16} h={15}>
    <circle cx="8" cy="7.500" r="6.500" fill="#37d043" stroke="#217a28" />
    <circle cx="6" cy="5" r="2" fill="#a5f0a8" stroke="none" />
  </Icon>
);
const history = (
  <Icon w={16} h={16}>
    <path d="M1 4V1h14v14H1V4M0 0l3 3M16 0l-3 3M16 16l-3-3M0 16l3-3" stroke="#999" />
    <path d="M3.500 3.500h6v6h-6z" />
    <path d="M6.500 6.500h6v6h-6z" fill="#ef8d1e" stroke="#a55c08" />
  </Icon>
);
const eye = (
  <Icon w={15} h={14}>
    <path d="M.5 7c4-6 10-6 14 0-4 6-10 6-14 0z" fill="#fff" />
    <circle cx="7.500" cy="7" r="3" fill={K} />
  </Icon>
);
const block = (
  <Icon w={17} h={16}>
    <path d="m1 5 7-4 8 3v8l-7 4-8-4z" fill="#d0d0d0" />
    <path d="m1 5 8 3v8l-8-4z" fill="#b0b0b0" />
    <path d="m9 8 7-4" />
  </Icon>
);

type NavRow = { guides: string; icons: ReactNode[]; text: string; tick?: boolean; bold?: boolean };

const NAV_ROWS: NavRow[] = [
  { guides: "-", icons: [tick, sheets], text: "图纸" },
  { guides: "|t", icons: [tick, sheet], text: '图纸页 "Sheet A0-01"', tick: true },
  { guides: "|t", icons: [tick, sheet], text: '图纸页 "Sheet A1-11"', tick: true },
  { guides: "|t", icons: [tick, sheet], text: '图纸页 "Sheet A2-21"', tick: true },
  { guides: "|t", icons: [tick, sheet], text: '图纸页 "Sheet A3-31"', tick: true },
  { guides: "|t", icons: [tick, sheet], text: '图纸页 "Sheet A4-4...', tick: true },
  { guides: "|+", icons: [question, folder], text: "过时" },
  { guides: "+", icons: [folder], text: "用户表达式", tick: true },
  { guides: "+", icons: [folder], text: "引用集" },
  { guides: "L", icons: [greenBall, history], text: "模型历史记录", tick: true },
  { guides: " l", icons: [eye, block], text: "块 (2)", tick: true, bold: true },
];

const NAV_SLOTS = 49;
const SECTIONS = ["搜索", "相关性", "细节", "预览"];

function Navigator() {
  return (
    <aside className="flex w-[256px] shrink-0 flex-col border-l border-[#a9a9a9] bg-white pr-[9px] pl-[7px] text-[12px] text-[#1f1f1f]">
      <div className="flex h-[27px] shrink-0 items-center">
        <Icon w={16} h={16} box="0 0 24 24">
          {partShape}
        </Icon>
        <span className="ml-[2px] font-medium">部件导航器</span>
        <button className="mr-[3px] ml-auto size-3 border border-black" aria-label="最大化" />
      </div>
      <div className="flex min-h-0 flex-1 flex-col border border-[#d5d5d5]">
        <div className="min-h-0 flex-1 overflow-hidden">
          <table className="w-full table-fixed border-collapse">
            <thead>
              <tr className="h-[21px] bg-[#f0f0f0] text-left">
                <th className="border-b border-[#d5d5d5] pl-[6px] font-normal">
                  <span className="flex items-center gap-[18px]">
                    名称
                    <svg width="9" height="5" viewBox="0 0 9 5" aria-hidden="true">
                      <path d="M4.500 0 9 5H0z" fill="#111" />
                    </svg>
                  </span>
                </th>
                <th className="w-6 border-b border-l border-[#d5d5d5] p-0 text-center font-normal">当</th>
                <th className="w-[14px] border-b border-l border-[#d5d5d5] p-0 font-normal">
                  <span className="flex w-[14px] overflow-hidden pl-[6px] whitespace-nowrap">最</span>
                </th>
              </tr>
            </thead>
            <tbody>
              {Array.from({ length: NAV_SLOTS }, (_, i) => {
                const row = NAV_ROWS[i];
                return (
                  <tr key={i} className="h-5 odd:bg-white even:bg-[#fafafa]">
                    <td className="h-5 overflow-hidden border-b border-[#e8e8e8] p-0">
                      {row && (
                        <div className={`flex h-[19px] items-center whitespace-nowrap ${row.bold ? "font-bold" : ""}`}>
                          <Guides spec={row.guides} />
                          {row.icons.map((icon, n) => (
                            <span key={n}>{icon}</span>
                          ))}
                          <span className="ml-[2px]">{row.text}</span>
                        </div>
                      )}
                    </td>
                    <td className="border-b border-l border-[#e8e8e8] p-0">
                      {row?.bold && (
                        <span className="flex justify-center">
                          <Icon w={9} h={15}>
                            <path d="M1.500 0v15M1.500 2.500H5M1.500 12.500H5M5 .5h3v3H5zM5 11h3v3H5z" />
                            <path d="M5 5.500h3v3H5z" fill={O} stroke={O} />
                          </Icon>
                        </span>
                      )}
                    </td>
                    <td className="border-b border-l border-[#e8e8e8] p-0">
                      {row?.tick && (
                        <span className="flex w-[14px] overflow-hidden pt-1 pl-[5px]">
                          <Icon w={10} h={8}>
                            <path d="m.5 2 4 4.500L9 2" stroke="#3bcf45" strokeWidth="2" />
                          </Icon>
                        </span>
                      )}
                    </td>
                  </tr>
                );
              })}
            </tbody>
          </table>
        </div>
        <div className="flex h-4 shrink-0 items-center bg-[#f0f0f0]">
          <button className="flex w-[17px] justify-center" aria-label="向左滚动">
            <Chevron d="M6 1 2.500 4.500 6 8" />
          </button>
          <div className="h-full w-[138px] bg-[#cdcdcd]" />
          <button className="ml-auto flex w-[17px] justify-center" aria-label="向右滚动">
            <Chevron d="m3 1 3.500 3.500L3 8" />
          </button>
        </div>
      </div>
      <div className="mt-[2px] h-[6px] shrink-0 border border-[#a5a5a5] bg-[#dcdcdc]" />
      <div className="h-[86px] shrink-0 overflow-hidden pt-[2px] text-[14px] text-[#005f87]">
        {SECTIONS.map((s) => (
          <button key={s} className="flex h-6 w-full items-center gap-[9px] border-b-2 border-[#cfcfcf] pt-[3px] pl-[10px]">
            <svg width="5" height="9" viewBox="0 0 5 9" aria-hidden="true">
              <path d="m0 0 5 4.500L0 9z" fill="#005f87" />
            </svg>
            {s}
          </button>
        ))}
      </div>
    </aside>
  );
}

const RAIL: { name: string; icon: ReactNode }[] = [
  {
    name: "装配",
    icon: (
      <Icon>
        <path d="m9 7 6-5 6 2v8l-6 5z" fill="#cfcfcf" stroke="#444" />
        <path d="m4 8 5-2 6 2v12l-5 3-6-3z" fill="#e6e6e6" stroke="#444" />
        <path d="m4 8 6 2 5-2 6-4M10 10v13M4 14l6 2 5-2" stroke="#444" />
      </Icon>
    ),
  },
  { name: "部件", icon: <Icon>{partShape}</Icon> },
  {
    name: "浏览器",
    icon: (
      <Icon>
        <path d="M.5.5h23v23H.5zM.5 4.500h23M15 2.500h1M18 2.500h1M21 2.500h1" fill="#efefef" strokeWidth="1.200" />
        <circle cx="12" cy="14" r="7.500" fill="#2b88a8" stroke="#1a6480" />
        <path d="M7 10c2-3 5-2 5 0s-3 2-2 4-3 1-3-4zM14 13c3-2 5 0 4 3s-4 2-4-3z" fill="#d7eef4" stroke="none" />
      </Icon>
    ),
  },
  {
    name: "历史",
    icon: (
      <Icon>
        <circle cx="12" cy="12" r="11" strokeWidth="1.300" />
        <path d="M12 4v8H7M12 1v2M12 21v2M1 12h2M21 12h2" />
      </Icon>
    ),
  },
  {
    name: "工具",
    icon: (
      <Icon>
        <path d="M.5 3.500v-3h8v3h15v20H.5z" fill="#f6f6f6" strokeWidth="1.200" />
        <path d="m6 9 12 12" strokeWidth="4" />
        <path d="m6 9 11.500 11.500" strokeWidth="2" stroke="#ddd" />
        <path d="M17 10 6 21" strokeWidth="4" />
        <path d="M17 10 6.500 20.500" strokeWidth="2" stroke="#aaa" />
        <path d="M3 6c-1 4 2 6 6 5 1-2 0-4-2-6l-1 3H4zM13 6c3-1 6 0 9 4l-3 2-5-4z" fill="#bbb" />
      </Icon>
    ),
  },
];

function Rail() {
  return (
    <nav className="flex w-[34px] shrink-0 flex-col bg-[#dadada]">
      <button className="flex h-8 items-center justify-center pr-1" aria-label="设置">
        <Icon w={17} h={17} box="0 0 18 18">
          <circle cx="9" cy="9" r="2.500" />
          <path d="M7.500 1h3l.5 2.500 1.500.6L14.700 2.800l1.600 2L15 7l.5 1.500 2 .5v2l-2.500.5-.7 1.500 1.400 2.200-2 1.500L12 15.500l-1 .5-.5 1.500h-3L7 15l-1.500-.6-2.200 1.300-1.700-2L3 11.500 2.500 10 .7 9.500v-2L3 7l.6-1.500L2.300 3.300l1.900-1.500L6.500 3z" />
        </Icon>
      </button>
      {RAIL.map((r, i) => (
        <button
          key={r.name}
          aria-label={r.name}
          className={`flex h-11 items-center justify-center ${i === 1 ? "-mr-px border-y border-[#a0a0a0] bg-white" : ""}`}
        >
          {r.icon}
        </button>
      ))}
    </nav>
  );
}

/* ---------- drawing sheet ---------- */

function TitleBlock() {
  const cell = "border border-[#333] p-0 leading-none";
  return (
    <table className="absolute right-[14px] bottom-[13px] w-[323px] table-fixed border-collapse text-center text-[8px] font-medium text-black">
      <colgroup>
        <col className="w-10" />
        <col className="w-[68px]" />
        <col className="w-10" />
        <col className="w-[67px]" />
        <col className="w-10" />
        <col />
      </colgroup>
      <tbody>
        <tr className="h-4">
          <td className={cell}>公司名称</td>
          <td className={`${cell} text-[9px]`} colSpan={3}>
            × × × × × 有限公司 - 研发部
          </td>
          <td className={cell}>角法</td>
          <td className={`${cell} align-top`}>
            <svg width="38" height="12" viewBox="0 0 38 12" fill="none" stroke="#111" className="ml-3" aria-hidden="true">
              <path d="M4 2.500h12v7H4z" strokeDasharray="5 2" />
              <path d="M0 6h20" stroke="#777" />
              <circle cx="31" cy="6" r="3.500" strokeWidth="1.500" />
              <path d="M31 0v12M25 6h12" />
            </svg>
          </td>
        </tr>
        <tr className="h-4">
          <td className={cell}>品名</td>
          <td className={cell} />
          <td className={cell}>材质</td>
          <td className={cell} />
          <td className={cell}>表面处理</td>
          <td className={cell} />
        </tr>
        <tr className="h-4">
          <td className={cell}>设计</td>
          <td className={cell} />
          <td className={cell}>单位</td>
          <td className={`${cell} text-[10px]`}>mm</td>
          <td className={`${cell} pt-1 pl-1 text-left align-top`} colSpan={2} rowSpan={2}>
            备注：
          </td>
        </tr>
        <tr className="h-4">
          <td className={cell}>审核</td>
          <td className={cell} />
          <td className={cell}>数量</td>
          <td className={`${cell} text-[11px]`}>pcs</td>
        </tr>
        <tr className="h-4">
          <td className={cell}>纸页</td>
          <td className={`${cell} text-[9px]`}>A4-210*297</td>
          <td className={cell}>比例</td>
          <td className={`${cell} text-[9px]`}>1 : 1</td>
          <td className={cell}>完成日期</td>
          <td className={cell} />
        </tr>
      </tbody>
    </table>
  );
}

function Sheet() {
  return (
    <div className="absolute top-[248px] left-[389px] h-[565px] w-[800px]">
      <svg width="800" height="565" viewBox="0 0 800 565" fill="none" className="absolute inset-0" aria-hidden="true">
        <path d="M1 1h798v563H1z" stroke="#949596" strokeWidth="2" />
        <path d="M1 1h798M1 1v563M799 1v563M1 564h798" stroke="#111" strokeDasharray="8 8" />
        <path d="M14 14h772v537H14z" stroke="#111" strokeWidth="2" />
      </svg>
      <div className="absolute right-[14px] bottom-[104px] w-[302px] text-center font-['DejaVu_Sans','Noto_Sans_CJK_SC',sans-serif] text-[10px] leading-[12px] font-medium text-black">
        <p>技术规范：</p>
        <p>表面处理，无毛刺 , 无划痕。</p>
        <p>公差范围 ± 0 . 0 1 , R 角拔模角均取最小值 .</p>
        <p>未标公差按照 G B / T 4 4 5 7 . 2 - 2 0 0 3 .</p>
      </div>
      <TitleBlock />
    </div>
  );
}

/* ---------- preferences dialog ---------- */

const PREF_ROWS: [string, string][] = [
  ["-", "公共"],
  ["|t", "文字"],
  ["|-", "直线/箭头"],
  ["||t", "箭头"],
  ["||t", "箭头线"],
  ["||t", "延伸线"],
  ["||t", "断开"],
  ["||l", "透视缩短符号"],
  ["|t", "原点"],
  ["|t", "前缀/后缀"],
  ["|t", "保留的注释"],
  ["|t", "层叠"],
  ["|t", "标准"],
  ["|l", "符号"],
  ["+", "尺寸"],
  ["+", "注释"],
  ["+", "符号"],
  ["+", "表"],
  ["-", "图纸常规/设置"],
  ["|t", "工作流程"],
  ["|l", "欢迎页面"],
  ["+", "图纸格式"],
];

function Panel({ title, children, className = "" }: { title: string; children?: ReactNode; className?: string }) {
  return (
    <section className={`shrink-0 rounded-[2px] border border-[#c9c9c9] bg-white px-2 ${className}`}>
      <h3 className="flex h-6 items-center gap-[7px] text-[13px] font-bold text-[#005f87]">
        <Caret color="#005f87" />
        {title}
      </h3>
      {children}
    </section>
  );
}

function ArrowPanel({ title, group, left }: { title: string; group: string; left?: boolean }) {
  return (
    <Panel title={title} className="h-[139px]">
      <div className="mt-[5px] flex h-6 items-center">
        <Check text="显示箭头" />
      </div>
      <div className="flex h-[26px] items-center justify-between">
        类型
        <DropDown
          label="类型"
          options={["填充箭头"]}
          className="h-[26px] w-[138px]"
          indent="pl-6"
          lead={
            <svg width="16" height="7" viewBox="0 0 16 7" aria-hidden="true">
              <path d={left ? "M0 3.500 6 .5V3h10v1H6v2.500z" : "M16 3.500 10 .5V3H0v1h10v2.500z"} fill="#000" />
            </svg>
          }
        />
      </div>
      <div className="mt-[2px] flex h-[26px] items-start justify-end gap-[2px]">
        <button className="size-6 border border-[#555] bg-black" aria-label="颜色" />
        <DropDown
          label="线型"
          options={[""]}
          className="h-[25px] w-[104px]"
          lead={
            <svg width="71" height="2" viewBox="0 0 71 2" className="ml-[3px]" aria-hidden="true">
              <path d="M0 0h71v2H0z" />
            </svg>
          }
        />
        <DropDown
          label="线宽"
          options={["0.35 mm"]}
          className="h-[26px] w-[119px]"
          indent="pl-[47px]"
          lead={
            <svg width="38" height="4" aria-hidden="true">
              <path d="M0 0h38v4H0z" />
            </svg>
          }
        />
      </div>
      <div className="mt-px flex h-6 items-center gap-[6px] pr-[3px]">
        <span className="mr-auto">方位</span>
        <Radio name={group} text="内" on />
        <Radio name={group} text="向外" />
      </div>
    </Panel>
  );
}

function PreferencesDialog() {
  return (
    <div
      role="dialog"
      aria-label="制图首选项"
      className="absolute top-[156px] left-[1259px] w-[597px] bg-[#f0f0f0] pb-[10px] text-[12px] text-[#1f1f1f]"
    >
      <div className="flex h-6 items-center bg-[#005f87] pr-[9px] pl-[7px] text-[14px] text-white">
        <Icon w={14} h={14}>
          <circle cx="7" cy="7" r="4" stroke="#fff" strokeWidth="2" />
          <path d="M7 0v3M7 11v3M0 7h3M11 7h3M2 2l2 2M10 10l2 2M12 2l-2 2M4 10l-2 2" stroke="#fff" strokeWidth="1.500" />
        </Icon>
        <h2 className="ml-2">制图首选项</h2>
        <button className="ml-auto" aria-label="重置">
          <Icon w={14} h={14}>
            <path d="M3 2v5a5 5 0 1 0 6-4M0 3h4v4" stroke="#fff" strokeWidth="1.700" />
          </Icon>
        </button>
        <button className="ml-[7px] w-[10px] text-center text-[16px] font-bold" aria-label="帮助">
          ?
        </button>
        <button className="ml-[11px]" aria-label="关闭">
          <Icon w={13} h={13}>
            <path d="m1.500 1.500 10 10M11.500 1.500l-10 10" stroke="#fff" strokeWidth="2" />
          </Icon>
        </button>
      </div>

      <label className="mx-[10px] mt-[7px] flex h-6 items-center">
        <Icon w={24} h={23}>
          <path d="M5.500 1.500h4v3M14.500 4.500v-3h4M9.500 4v5h5V4M5.500 2v6L.5 16v6.500h10V11h3v11.500h10V16l-5-8V2M.5 17.500h10M13.500 17.500h10" />
        </Icon>
        <span className="ml-[2px]">查找</span>
        <input className="ml-[6px] h-[23px] min-w-0 flex-1 border border-[#7a7a7a] bg-white px-1 outline-none" />
      </label>

      <div className="mt-2 mr-[13px] ml-3 flex h-[436px] gap-[10px]">
        <div className="flex w-[177px] shrink-0 border border-[#d5d5d5] bg-white p-px">
          <ul className="min-w-0 flex-1 overflow-hidden">
            {PREF_ROWS.map(([guides, text], i) => (
              <li key={i} className="flex h-5 items-center border-b border-[#e8e8e8] odd:bg-white even:bg-[#fafafa]">
                <Guides spec={guides} />
                <span
                  className={
                    text === "箭头" ? "h-full flex-1 bg-[#cde6ea] pl-[2px] leading-[19px]" : "pl-[2px] whitespace-nowrap"
                  }
                >
                  {text}
                </span>
              </li>
            ))}
          </ul>
          <ScrollBar thumb="h-[310px]" />
          <div className="w-px" />
        </div>
        <div className="flex min-w-0 flex-1 border border-[#d5d5d5] pt-px pl-px">
          <div className="mr-[3px] flex min-w-0 flex-1 flex-col gap-[3px] overflow-hidden">
            <Panel title="范围" className="h-[60px]">
              <div className="mt-[5px] flex h-6 items-center">
                <Check text="应用于整个尺寸" />
              </div>
            </Panel>
            <Panel title="工作流程" className="h-[60px]">
              <div className="mt-[5px] flex h-6 items-center">
                <Check text="自动定位" off />
              </div>
            </Panel>
            <ArrowPanel title="第 1 侧指引线和尺寸" group="side1" left />
            <ArrowPanel title="第 2 侧尺寸" group="side2" />
            <Panel title="格式" className="h-[60px]" />
          </div>
          <ScrollBar thumb="h-[329px]" />
        </div>
      </div>

      <Panel title="继承" className="mx-[10px] mt-[3px] h-[98px]">
        <div className="mt-[6px] flex h-[26px] items-center justify-between">
          设置源
          <DropDown label="设置源" options={["首选项"]} className="h-[25px] w-[138px]" />
        </div>
        <div className="mt-px flex h-8 items-center justify-between">
          从设置源加载
          <button className="flex size-8 items-center justify-center border border-[#6e6e6e] bg-white" aria-label="从设置源加载">
            <Icon w={24} h={24}>
              <path d="m2 22 2-6 9-9 4 4-9 9z" fill="#dbe8f4" stroke="#222" />
              <path d="m11 5 8 8M14 8l5-6c2-2 5 1 3 3l-5 6z" fill="#2d6cab" stroke="#16304f" strokeWidth="1.500" />
            </Icon>
          </button>
        </div>
      </Panel>
      <div className="mx-[6px] flex h-5 items-center justify-center border-b border-[#cfcfcf] pt-[6px]">
        <button aria-label="折叠">
          <svg width="9" height="5" viewBox="0 0 9 5" aria-hidden="true">
            <path d="M4.500 0 9 5H0z" fill="#111" />
          </svg>
        </button>
      </div>
      <div className="mt-2 flex justify-end gap-[5px] pr-4">
        <button className="h-[25px] w-[54px] border border-[#005f87] bg-[#005f87] text-white">确定</button>
        <button className="h-[25px] w-[54px] border border-[#005f87] text-[#005f87]">应用</button>
        <button className="h-[25px] w-[54px] border border-[#005f87] text-[#005f87]">取消</button>
      </div>
    </div>
  );
}

/* ---------- work area ---------- */

function WorkArea() {
  return (
    <main className="flex min-w-0 flex-1 flex-col border-l-2 border-[#a0a0a0]">
      <div className="flex h-[27px] shrink-0 border-b-2 border-[#1f5c78] bg-white text-[12px] text-[#1f1f1f]">
        <button className="flex w-[95px] items-center gap-1 pl-[5px]">
          <Icon w={16} h={16}>
            <path d="M1 2h3l4 3v4M15 1l-4 2v10l4 2z" />
            <circle cx="6" cy="10.500" r="4.500" />
            <path d="m4 13 1-3 3-2-1 3zM1 2v7" />
          </Icon>
          发现中心
        </button>
        <div className="flex w-[133px] items-center bg-[#005f87] pl-[6px] text-[13px] text-white">
          <Icon w={15} h={15}>
            <path d="M1 5h10v9H1zM1 5l2-3h11v2l-3 1" fill="#666" stroke="#111" strokeWidth="1.500" />
            <circle cx="6" cy="9.500" r="3" fill="#c5c5c5" stroke="#111" />
          </Icon>
          <span className="ml-[5px]">_model1.prt</span>
          <span className="ml-1">
            <Icon w={11} h={12}>
              <path d="M6 1H1v10h8V8M6 1l3 3-3 3M6 8l4-4" stroke="#fff" strokeWidth="1.500" />
            </Icon>
          </span>
          <button className="ml-[5px]" aria-label="关闭标签">
            <Icon w={9} h={9}>
              <path d="m1 1 7 7M8 1 1 8" stroke="#cfe0e8" strokeWidth="2" />
            </Icon>
          </button>
        </div>
      </div>
      <div className="relative flex-1 overflow-hidden bg-[#d3d4d6]">
        <Sheet />
        <PreferencesDialog />
        <p className="absolute right-[5px] bottom-[2px] flex items-center gap-2 font-['Liberation_Mono','Noto_Sans_CJK_SC',monospace] text-[13px] leading-5 text-[#7d7d7d] [text-shadow:-1px_-1px_0_#f2f2f2]">
          <span>
            UG<span className="text-[16px]">爱好者论坛</span>
          </span>
          <span>WWW.UGSNX.COM</span>
        </p>
      </div>
    </main>
  );
}

export default function App() {
  return (
    <div className="flex h-screen flex-col overflow-hidden bg-white font-['Noto_Sans','Noto_Sans_CJK_SC',sans-serif]">
      <MenuBar />
      <div className="flex h-[121px] shrink-0 overflow-hidden">
        {GROUPS.map((g) => (
          <RibbonGroup key={g.name} group={g} />
        ))}
      </div>
      <Toolbar />
      <div className="flex min-h-0 flex-1">
        <Rail />
        <Navigator />
        <WorkArea />
      </div>
    </div>
  );
}
